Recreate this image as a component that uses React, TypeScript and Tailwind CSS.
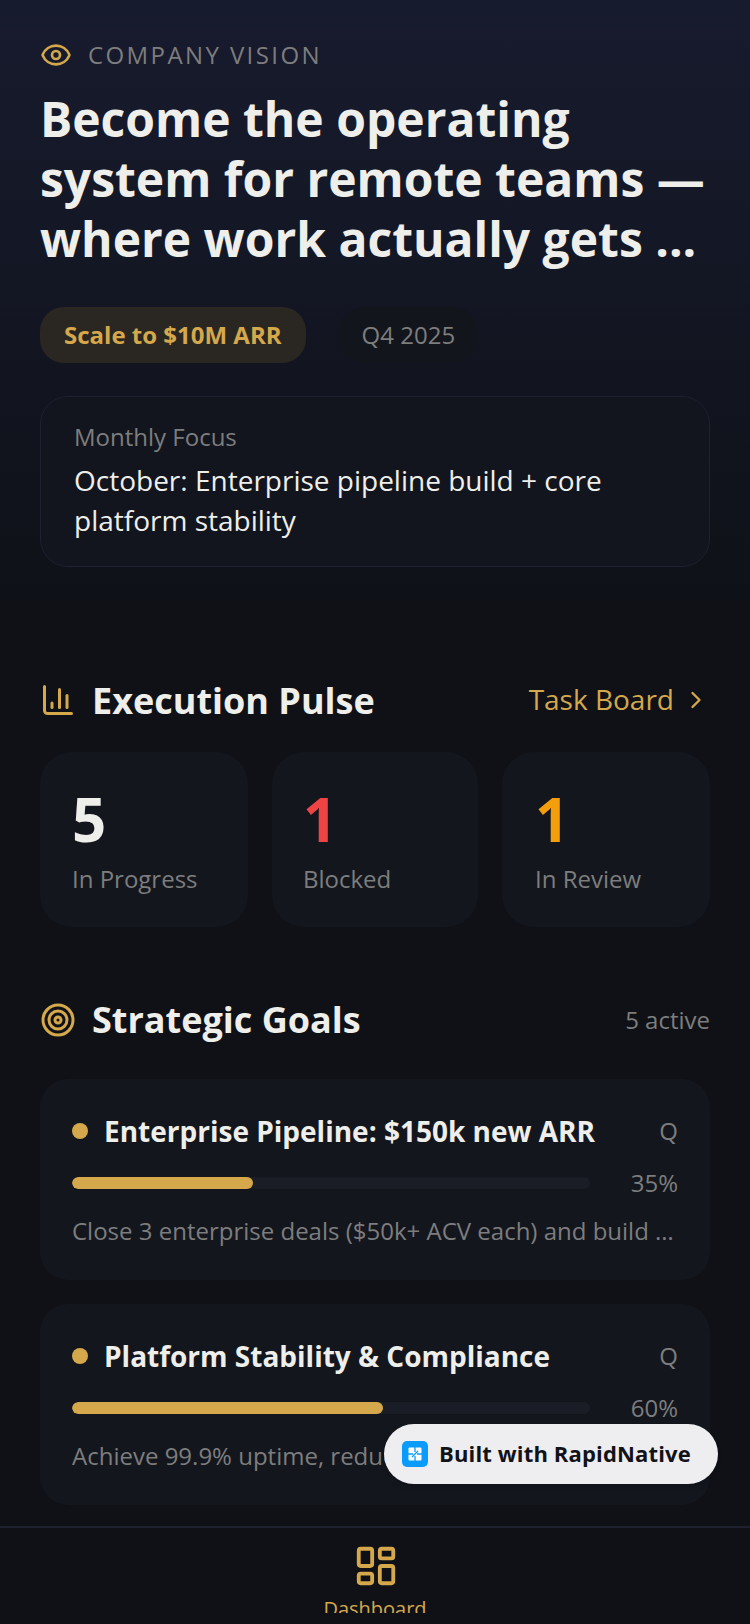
import { ChartColumn, ChevronRight, Eye, LayoutDashboard, Target } from 'lucide-react'

const stats = [
  { value: '5', label: 'In Progress', color: 'text-[#eeeeea]', box: 'w-[208px] pl-8' },
  { value: '1', label: 'Blocked', color: 'text-[#ef4444]', box: 'w-[206px] pl-[31px]' },
  { value: '1', label: 'In Review', color: 'text-[#f59e0b]', box: 'w-[208px] pl-[33px]' },
]

const goals = [
  {
    title: 'Enterprise Pipeline: $150k new ARR',
    pct: 35,
    text: 'Close 3 enterprise deals ($50k+ ACV each) and build a repeatable sales motion for the team',
  },
  {
    title: 'Platform Stability & Compliance',
    pct: 60,
    text: 'Achieve 99.9% uptime, reduce incidents and complete the SOC 2 compliance audit this year',
  },
]

function GoalCard({ goal }: { goal: (typeof goals)[number] }) {
  return (
    <div className="rounded-[28px] bg-[#13161d] px-8 pt-[32px] pb-[31px]">
      <div className="flex items-center h-[40px]">
        <div className="w-4 h-4 rounded-full bg-[#d4a84b] shrink-0" />
        <div className="ml-4 flex-1 text-[28px] leading-[40px] font-bold text-[#eeeeea] truncate">{goal.title}</div>
        <div className="text-2xl text-[#7d7d7d]">Q</div>
      </div>
      <div className="flex items-center mt-[12px] h-[40px]">
        <div className="w-[518px] h-3 rounded-full bg-[#1a1d26] overflow-hidden">
          <div className="h-full rounded-full bg-[#d4a84b]" style={{ width: `${goal.pct}%` }} />
        </div>
        <div className="ml-auto text-2xl text-[#7d7d7d]">{goal.pct}%</div>
      </div>
      <div className="mt-[10px] text-2xl leading-[36px] text-[#7d7d7d] truncate">{goal.text}</div>
    </div>
  )
}

export default function App() {
  return (
    <div
      className="relative flex flex-col h-[1624px] w-[750px] overflow-hidden bg-[#0f1117]"
      style={{ fontFamily: '"Open Sans", "Noto Sans", sans-serif' }}
    >
      <div className="flex-1 min-h-0 overflow-hidden">
        <div className="px-10 pt-[39px] h-[620px] bg-gradient-to-b from-[#171b2e] to-[#0f1117]">
          <div className="flex items-center h-[32px]">
            <Eye className="w-8 h-8 text-[#d4a84b]" strokeWidth={2} />
            <span className="ml-[16px] text-2xl tracking-[2.4px] text-[#7d7d7d]">COMPANY VISION</span>
          </div>
          <h1 className="mt-[18px] text-[48px] leading-[60px] font-bold text-[#eeeeea]">
            Become the operating system for remote teams — where work actually gets ...
          </h1>
          <div className="flex items-center gap-[34px] mt-[38px]">
            <div className="h-14 px-6 flex items-center rounded-[24px] bg-[#2a2723] text-2xl font-bold text-[#d4a84b]">
              Scale to $10M ARR
            </div>
            <div className="h-14 px-[22px] flex items-center rounded-[24px] bg-[#12151c] text-2xl text-[#7d7d7d]">
              Q4 2025
            </div>
          </div>
          <div className="mt-[33px] h-[171px] rounded-[28px] border border-[#1d2130] bg-[#12151d] pl-[33px] pr-8 pt-[22px]">
            <div className="text-2xl leading-[36px] text-[#7d7d7d]">Monthly Focus</div>
            <div className="mt-[5px] text-[28px] leading-[40px] text-[#eeeeea]">
              October: Enterprise pipeline build + core platform stability
            </div>
          </div>
        </div>

        <div className="px-10">
          <div className="flex items-center justify-between mt-[56px] h-[48px]">
            <div className="flex items-center">
              <ChartColumn className="w-9 h-9 text-[#d4a84b]" strokeWidth={2} />
              <span className="ml-4 mt-[2px] text-[36px] leading-[48px] font-bold text-[#eeeeea]">Execution Pulse</span>
            </div>
            <div className="flex items-center text-[28px] text-[#d4a84b]">
              <span className="-mt-[2px]">Task Board</span>
              <ChevronRight className="ml-2 w-7 h-7" strokeWidth={2} />
            </div>
          </div>

          <div className="flex justify-between mt-[28px]">
            {stats.map((s) => (
              <div key={s.label} className={`${s.box} h-[175px] rounded-[32px] bg-[#13161d] pt-[31px]`}>
                <div className={`text-[60px] leading-[72px] font-bold ${s.color}`}>{s.value}</div>
                <div className="mt-[6px] text-2xl leading-[36px] text-[#7d7d7d]">{s.label}</div>
              </div>
            ))}
          </div>

          <div className="flex items-center justify-between mt-[69px] h-[48px]">
            <div className="flex items-center">
              <Target className="w-9 h-9 text-[#d4a84b]" strokeWidth={2} />
              <span className="ml-4 text-[36px] leading-[48px] font-bold text-[#eeeeea]">Strategic Goals</span>
            </div>
            <span className="text-2xl text-[#7d7d7d]">5 active</span>
          </div>

          <div className="flex flex-col gap-6 mt-[35px]">
            {goals.map((g) => (
              <GoalCard key={g.title} goal={g} />
            ))}
          </div>
        </div>
      </div>

      <div className="shrink-0 h-[98px] border-t-2 border-[#1d2130] bg-[#0f1117]">
        <div className="flex flex-col items-center h-[85px] overflow-hidden pt-[15px]">
          <LayoutDashboard className="shrink-0 ml-[2px] w-[46px] h-[46px] text-[#d4a84b]" strokeWidth={2} />
          <span className="shrink-0 mt-[5px] text-[20px] leading-[30px] text-[#d4a84b]">Dashboard</span>
        </div>
      </div>

      <div className="absolute left-[384px] top-[1424px] h-[60px] w-[334px] flex items-center rounded-full bg-[#eeeef0] pl-[18px] shadow-md">
        <svg viewBox="0 0 26 26" className="w-[26px] h-[26px]">
          <rect width="26" height="26" rx="5" fill="#0a9bff" />
          <rect x="6.5" y="6.5" width="13" height="13" rx="1" fill="#fff" />
          <path d="M13 6v5M6 13h5M13 20v-5M20 13h-5M10 16l6-6" stroke="#0a9bff" strokeWidth="1.3" fill="none" />
        </svg>
        <span className="ml-[11px] pb-[2px] text-[22px] tracking-[0.15px] font-bold text-[#111318]">Built with RapidNative</span>
      </div>
    </div>
  )
}
